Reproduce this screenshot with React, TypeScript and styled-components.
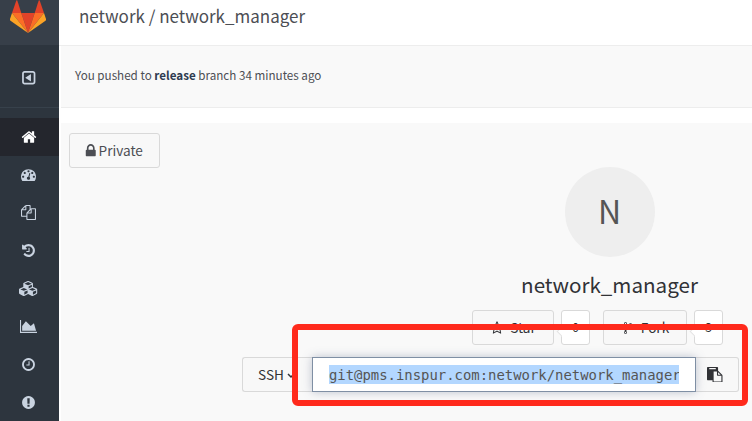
import React from "react";
import styled, { createGlobalStyle } from "styled-components";

const GlobalStyle = createGlobalStyle`
  * { box-sizing: border-box; }
  html, body { margin: 0; padding: 0; overflow: hidden; background: #fff; }
  body { font-family: "Noto Sans CJK SC", "Open Sans", sans-serif; color: #4c4e54; }
`;

const paths = {
  home: "M1472 992v480q0 26-19 45t-45 19h-384v-384h-256v384h-384q-26 0-45-19t-19-45v-480q0-1 .5-3t.5-3l575-474 575 474q1 2 1 6zm223-69l-62 74q-8 9-21 11h-3q-13 0-21-7l-692-577-692 577q-12 8-24 7-13-2-21-11l-62-74q-8-10-7-23.5t11-21.5l719-599q32-26 76-26t76 26l244 204v-195q0-14 9-23t23-9h192q14 0 23 9t9 23v408l219 182q10 8 11 21.5t-7 23.5z",
  dashboard: "M384 1152q0-53-37.5-90.5t-90.5-37.5-90.5 37.5-37.5 90.5 37.5 90.5 90.5 37.5 90.5-37.5 37.5-90.5zm192-448q0-53-37.5-90.5t-90.5-37.5-90.5 37.5-37.5 90.5 37.5 90.5 90.5 37.5 90.5-37.5 37.5-90.5zm428 481l101-382q6-26-7.5-48.5t-38.5-29.5-48 6.5-30 39.5l-101 382q-60 5-107 43.5t-63 98.5q-20 77 20 146t117 89 146-20 89-117q16-60-6-117t-72-91zm660-33q0-53-37.5-90.5t-90.5-37.5-90.5 37.5-37.5 90.5 37.5 90.5 90.5 37.5 90.5-37.5 37.5-90.5zm-640-640q0-53-37.5-90.5t-90.5-37.5-90.5 37.5-37.5 90.5 37.5 90.5 90.5 37.5 90.5-37.5 37.5-90.5zm448 192q0-53-37.5-90.5t-90.5-37.5-90.5 37.5-37.5 90.5 37.5 90.5 90.5 37.5 90.5-37.5 37.5-90.5zm320 448q0 261-141 483-19 29-54 29h-1402q-35 0-54-29-141-221-141-483 0-182 71-348t191-286 286-191 348-71 348 71 286 191 191 286 71 348z",
  files: "M1696 384q40 0 68 28t28 68v1216q0 40-28 68t-68 28h-960q-40 0-68-28t-28-68v-288h-544q-40 0-68-28t-28-68v-672q0-40 20-88t48-76l408-408q28-28 76-48t88-20h416q40 0 68 28t28 68v328q68-40 128-40h416zm-544 213l-299 299h299v-299zm-640-384l-299 299h299v-299zm196 647l316-316v-416h-384v416q0 40-28 68t-68 28h-416v640h512v-256q0-40 20-88t48-76zm956 804v-1152h-384v416q0 40-28 68t-68 28h-416v640h896z",
  history: "M1664 896q0 156-61 298t-164 245-245 164-298 61q-172 0-327-72.5t-264-204.5q-7-10-6.5-22.5t8.5-20.5l137-138q10-9 25-9 16 2 23 12 73 95 179 147t225 52q104 0 198.5-40.5t163.5-109.5 109.5-163.5 40.5-198.5-40.5-198.5-109.5-163.5-163.5-109.5-198.5-40.5q-98 0-188 35.5t-160 101.5l137 138q31 30 14 69-17 40-59 40h-448q-26 0-45-19t-19-45v-448q0-42 40-59 39-17 69 14l130 129q107-101 244.5-156.5t284.5-55.5q156 0 298 61t245 164 164 245 61 298zm-640-288v448q0 14-9 23t-23 9h-320q-14 0-23-9t-9-23v-64q0-14 9-23t23-9h224v-352q0-14 9-23t23-9h64q14 0 23 9t9 23z",
  cubes: "M640 1632l384-192v-314l-384 164v342zm-64-454l404-173-404-173-404 173zm1088 454l384-192v-314l-384 164v342zm-64-454l404-173-404-173-404 173zm-448-293l384-165v-266l-384 164v267zm-64-379l441-189-441-189-441 189zm1088 518v416q0 36-19 67t-52 47l-448 224q-25 14-57 14t-57-14l-448-224q-4-2-7-4-2 2-7 4l-448 224q-25 14-57 14t-57-14l-448-224q-33-16-52-47t-19-67v-416q0-38 21.5-70t56.5-48l434-186v-400q0-38 21.5-70t56.5-48l448-192q23-10 50-10t50 10l448 192q35 16 56.5 48t21.5 70v400l434 186q36 16 57 48t21 70z",
  chart: "M2048 1536v128h-2048v-1536h128v1408h1920zm-384-1024l256 896h-1664v-576l448-576 576 576z",
  clock: "M1024 544v448q0 14-9 23t-23 9h-320q-14 0-23-9t-9-23v-64q0-14 9-23t23-9h224v-352q0-14 9-23t23-9h64q14 0 23 9t9 23zm416 352q0-148-73-273t-198-198-273-73-273 73-198 198-73 273 73 273 198 198 273 73 273-73 198-198 73-273zm224 0q0 209-103 385.5t-279.5 279.5-385.5 103-385.5-103-279.5-279.5-103-385.5 103-385.5 279.5-279.5 385.5-103 385.5 103 279.5 279.5 103 385.5z",
  alert: "M896 128q209 0 385.5 103t279.5 279.5 103 385.5-103 385.5-279.5 279.5-385.5 103-385.5-103-279.5-279.5-103-385.5 103-385.5 279.5-279.5 385.5-103zm128 1247v-190q0-14-9-23.5t-22-9.5h-192q-13 0-23 10t-10 23v190q0 13 10 23t23 10h192q13 0 22-9.5t9-23.5zm-2-344l18-621q0-12-10-18-10-8-24-8h-220q-14 0-24 8-10 6-10 18l17 621q0 10 10 17.5t24 7.5h185q14 0 23.5-7.5t10.5-17.5z",
  lock: "M640 768h512v-192q0-106-75-181t-181-75-181 75-75 181v192zm832 96v576q0 40-28 68t-68 28h-960q-40 0-68-28t-28-68v-576q0-40 28-68t68-28h32v-192q0-184 132-316t316-132 316 132 132 316v192h32q40 0 68 28t28 68z",
  star: "M1201 1004l306-297-422-62-189-382-189 382-422 62 306 297-73 421 378-199 377 199zm527-357q0 22-26 48l-363 354 86 500q1 7 1 20 0 50-41 50-19 0-40-12l-449-236-449 236q-22 12-40 12-21 0-31.5-14.5t-10.5-35.5q0-6 2-20l86-500-364-354q-25-27-25-48 0-37 56-46l502-73 225-455q19-41 49-41t49 41l225 455 502 73q56 9 56 46z",
  fork: "M672 1472q0-40-28-68t-68-28-68 28-28 68 28 68 68 28 68-28 28-68zm0-1152q0-40-28-68t-68-28-68 28-28 68 28 68 68 28 68-28 28-68zm640 128q0-40-28-68t-68-28-68 28-28 68 28 68 68 28 68-28 28-68zm96 0q0 52-26 96.5t-70 69.5q-2 287-226 414-67 38-203 81-128 40-169.5 71t-41.5 100v26q44 25 70 69.5t26 96.5q0 80-56 136t-136 56-136-56-56-136q0-52 26-96.5t70-69.5v-820q-44-25-70-69.5t-26-96.5q0-80 56-136t136-56 136 56 56 136q0 52-26 96.5t-70 69.5v497q54-26 154-57 55-17 87.5-29.5t70.5-31 59-39.5 40.5-51 28-69.5 8.5-91.5q-44-25-70-69.5t-26-96.5q0-80 56-136t136-56 136 56 56 136z",
  paste: "M768 1664h896v-640h-416q-40 0-68-28t-28-68v-416h-384v1152zm256-1440v-64q0-13-9.5-22.5t-22.5-9.5h-704q-13 0-22.5 9.5t-9.5 22.5v64q0 13 9.5 22.5t22.5 9.5h704q13 0 22.5-9.5t9.5-22.5zm256 672h299l-299-299v299zm512 128v672q0 40-28 68t-68 28h-960q-40 0-68-28t-28-68v-160h-544q-40 0-68-28t-28-68v-1344q0-40 28-68t68-28h1088q40 0 68 28t28 68v328q21 13 36 28l408 408q28 28 48 76t20 88z",
  collapse: "M1150 500v792q0 40-34 22l-590-390q-24-28 0-56l590-390q34-18 34 22zM416 128h960q119 0 203.500 84.500t84.500 203.500v960q0 119-84.500 203.500t-203.500 84.500h-960q-119 0-203.500-84.500t-84.500-203.500v-960q0-119 84.500-203.500t203.500-84.500zm0 200q-88 0-88 88v960q0 88 88 88h960q88 0 88-88v-960q0-88-88-88z",
};

type IconName = keyof typeof paths;

const Glyph = styled.svg`
  display: block;
  flex: none;
  fill: currentColor;
`;

const Icon = ({ name, size, wide = 1792 }: { name: IconName; size: number; wide?: number }) => (
  <Glyph width={(size * wide) / 1792} height={size} viewBox={`0 0 ${wide} 1792`}>
    <path d={paths[name]} fillRule={name === "collapse" ? "evenodd" : undefined} />
  </Glyph>
);

const Page = styled.div`
  position: relative;
  display: flex;
  width: 752px;
  height: 421px;
  overflow: hidden;
`;

const Sidebar = styled.nav`
  flex: none;
  width: 59px;
  background: #2d353e;
  color: #c9d3e0;
`;

const Brand = styled.div`
  height: 45px;
  display: flex;
  justify-content: center;
  padding-right: 3px;
  background: #373f49;
  overflow: hidden;
`;

const Toggle = styled.div`
  height: 63px;
  margin-bottom: 10px;
  display: flex;
  align-items: center;
  justify-content: center;
  padding: 3px 2px 0 0;
  border-bottom: 1px solid #37414b;
`;

const NavItem = styled.div<{ $active?: boolean }>`
  height: 37.9px;
  display: flex;
  align-items: center;
  justify-content: center;
  padding-right: 2px;
  background: ${(p) => (p.$active ? "#24262d" : "transparent")};
  color: ${(p) => (p.$active ? "#fff" : "inherit")};
`;

const Main = styled.main`
  flex: 1;
  min-width: 0;
  padding-left: 2px;
  display: flex;
  flex-direction: column;
`;

const Header = styled.header`
  height: 46px;
  flex: none;
  margin-left: -2px;
  padding-left: 20px;
  border-bottom: 1px solid #ededed;
  font-size: 17px;
  line-height: 32px;
  white-space: pre;
`;

const Event = styled.section`
  height: 62px;
  flex: none;
  padding-left: 14px;
  background: #f9f9f9;
  border-bottom: 1px solid #ededed;
  font-size: 11.65px;
  line-height: 58px;
  white-space: pre;

  strong {
    color: #2e3b50;
  }
`;

const Project = styled.section`
  flex: 1;
  margin-top: 15px;
  padding: 10px 0 0 8px;
  background: #f9f9f9;
`;

const Button = styled.div<{ $w: number }>`
  width: ${(p) => p.$w}px;
  height: 35px;
  flex: none;
  display: flex;
  align-items: center;
  justify-content: center;
  border: 1px solid #d9d9d9;
  border-radius: 3px;
  background: #f8f8f8;
  font-size: 13.6px;
  line-height: 33px;
`;

const Visibility = styled(Button)`
  padding-right: 3px;
`;

const Identity = styled.div`
  width: 177px;
  margin-left: 452px;
  margin-top: -1px;
  display: flex;
  flex-direction: column;
  align-items: center;
`;

const Avatar = styled.div`
  width: 90px;
  height: 90px;
  border-radius: 50%;
  background: #eee;
  color: #555;
  text-align: center;
  font-size: 32px;
  line-height: 87px;
`;

const Title = styled.h1`
  margin: 11px 0 0;
  height: 42px;
  font-size: 20.6px;
  font-weight: 400;
  line-height: 33px;
  color: #313236;
`;

const Actions = styled.div`
  display: flex;
  margin-left: 403px;
  color: #313236;
`;

const Count = styled.div`
  position: relative;
  width: 29px;
  height: 35px;
  margin: 0 13px 0 7px;
  border: 1px solid #d9d9d9;
  border-radius: 3px;
  background: #fff;
  text-align: center;
  font-size: 12px;
  line-height: 32px;

  &::before {
    content: "";
    position: absolute;
    left: -4px;
    top: 17px;
    width: 6px;
    height: 6px;
    border: solid #e4e4e4;
    border-width: 0 0 1px 1px;
    background: #fff;
    transform: rotate(45deg);
  }
`;

const Label = styled.span<{ $gap: number }>`
  margin-left: ${(p) => p.$gap}px;
`;

const Clone = styled.div`
  display: flex;
  margin: 12px 0 0 173px;
  color: #313236;
`;

const Protocol = styled(Button)`
  border-radius: 3px 0 0 3px;
  border-right: 0;
  justify-content: flex-start;
  padding-left: 15px;
`;

const Chevron = styled.svg`
  margin: 2px 0 0 3px;
  fill: none;
  stroke: currentColor;
  stroke-width: 1.5;
`;

const UrlBox = styled.div`
  position: relative;
  width: 384px;
  height: 35px;
  padding: 7px 16px 0;
  border: 1px solid #7f8fa4;
  background: #fff;
  box-shadow: 0 0 9px rgba(80, 95, 130, 0.35);
`;

const UrlText = styled.div`
  height: 19px;
  overflow: hidden;
  background: #b3d7ff;
  color: #555;
  font-family: "DejaVu Sans Mono", monospace;
  font-size: 13.92px;
  line-height: 20px;
  white-space: nowrap;
`;

const Copy = styled(Button)`
  border-left: 0;
  border-radius: 0 3px 3px 0;
  padding-right: 4px;
`;

const Highlight = styled.div`
  position: absolute;
  left: 291.5px;
  top: 323.5px;
  width: 456.5px;
  height: 82.5px;
  border: 6px solid #ff2a1c;
  border-radius: 6px;
`;

const navItems: { name: IconName; size: number; wide?: number }[] = [
  { name: "home", size: 16 },
  { name: "dashboard", size: 15 },
  { name: "files", size: 15 },
  { name: "history", size: 15 },
  { name: "cubes", size: 15, wide: 2304 },
  { name: "chart", size: 15, wide: 2048 },
  { name: "clock", size: 15 },
  { name: "alert", size: 15 },
];

const Logo = () => (
  <svg width="36" height="36" viewBox="0 0 36 36">
    <g transform="translate(0 -3)">
      <path d="M18 36 24.700 16H11.300Z" fill="#e24329" />
      <path d="M18 36 11.300 16H2Z" fill="#fc6d26" />
      <path d="M2 16 0 22q-.3 1 .5 1.700L18 36Z" fill="#fca326" />
      <path d="M2 16h9.300L7.300 3.600q-.4-.8-1 0Z" fill="#e24329" />
      <path d="M18 36 24.700 16H34Z" fill="#fc6d26" />
      <path d="m34 16 2 6q.3 1-.5 1.700L18 36Z" fill="#fca326" />
      <path d="M34 16h-9.300l4-12.400q.4-.8 1 0Z" fill="#e24329" />
    </g>
  </svg>
);

export default function App() {
  return (
    <>
      <GlobalStyle />
      <Page>
        <Sidebar>
          <Brand><Logo /></Brand>
          <Toggle><Icon name="collapse" size={15.5} /></Toggle>
          {navItems.map((item) => (
            <NavItem key={item.name} $active={item.name === "home"}>
              <Icon {...item} />
            </NavItem>
          ))}
        </Sidebar>
        <Main>
          <Header>network / network_manager</Header>
          <Event>You pushed to <strong>release</strong> branch 34 minutes ago</Event>
          <Project>
            <Visibility $w={91}>
              <Icon name="lock" size={15.5} />
              <Label $gap={0}>Private</Label>
            </Visibility>
            <Identity>
              <Avatar>N</Avatar>
              <Title>network_manager</Title>
            </Identity>
            <Actions>
              <Button $w={82}>
                <Icon name="star" size={14} />
                <Label $gap={6}>Star</Label>
              </Button>
              <Count>0</Count>
              <Button $w={84}>
                <Icon name="fork" size={14} />
                <Label $gap={6}>Fork</Label>
              </Button>
              <Count>3</Count>
            </Actions>
            <Clone>
              <Protocol $w={70}>
                SSH
                <Chevron width="9" height="8" viewBox="0 0 9 8">
                  <path d="m1 2 3 3 3-3" />
                </Chevron>
              </Protocol>
              <UrlBox>
                <UrlText>git@pms.inspur.com:network/network_manager</UrlText>
              </UrlBox>
              <Copy $w={43}><Icon name="paste" size={15.5} /></Copy>
            </Clone>
          </Project>
        </Main>
        <Highlight />
      </Page>
    </>
  );
}
